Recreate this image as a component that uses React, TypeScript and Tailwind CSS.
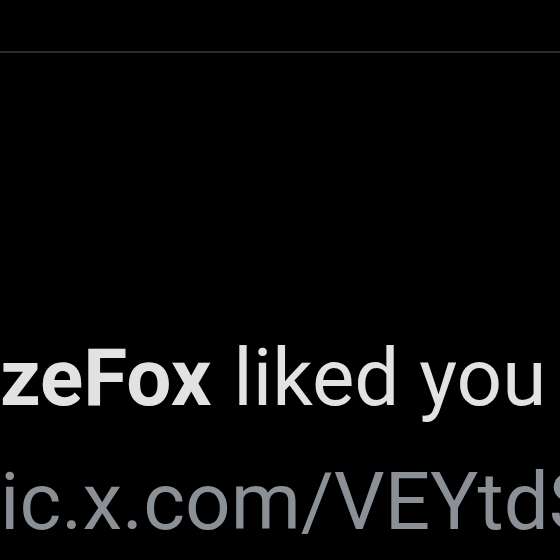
export default function App() {
  return (
    <div className="w-[560px] h-[560px] bg-black overflow-hidden font-['Roboto',sans-serif]">
      <div className="h-[51px]" />
      <div className="h-[2px] bg-[#2a2a2a]" />
      <div className="pt-[263px] whitespace-nowrap text-[80px] leading-[124px]">
        <p className="text-[#e2e2e2]">
          <span className="font-bold">zeFox</span>
          <span className="ml-[2px]"> liked you</span>
        </p>
        <p className="text-[#8a9096]">ic.x.com/VEYtdS</p>
      </div>
    </div>
  );
}
